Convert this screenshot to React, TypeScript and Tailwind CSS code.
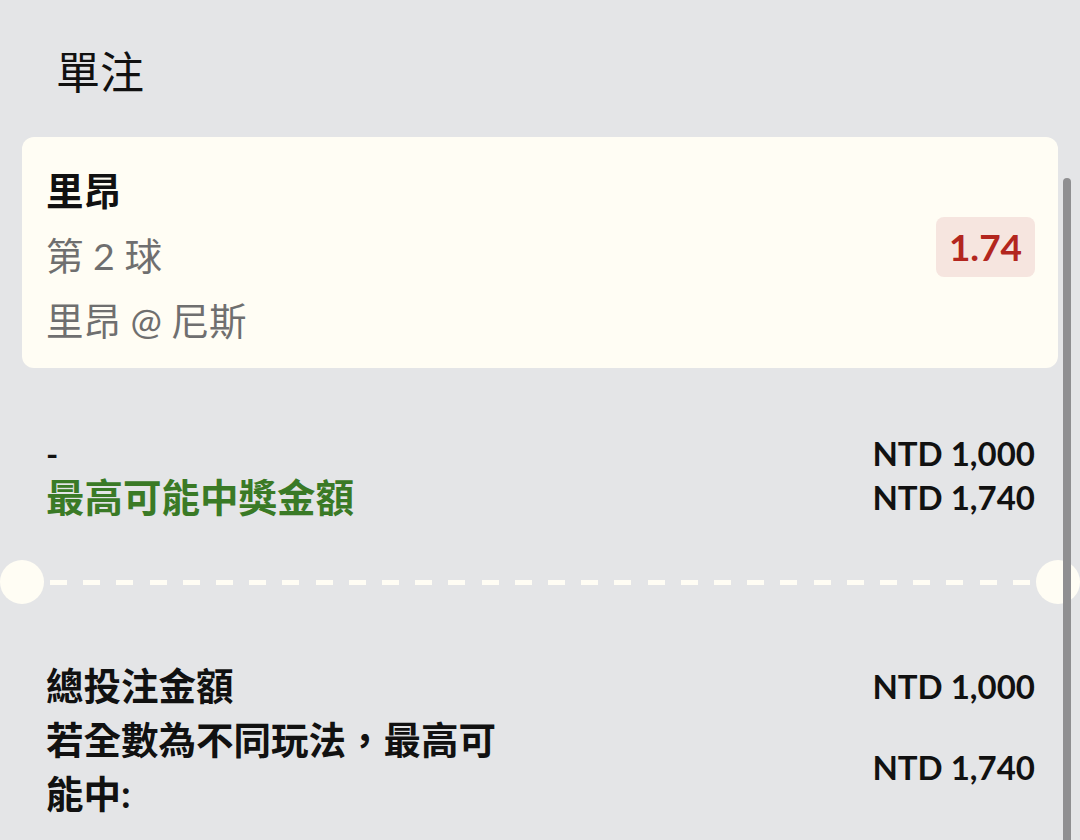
const dashes = Array.from({ length: 30 }, (_, i) => i);

function Hole() {
  return <div className="w-[44px] h-[44px] rounded-full bg-[#fffdf4] shrink-0" />;
}

export default function App() {
  return (
    <main className="relative w-[1080px] min-h-[840px] overflow-hidden bg-[#e4e5e7] text-[#111] font-['Lato','Noto_Sans_CJK_TC',sans-serif]">
      {/* HEADER */}
      <h1 className="pl-[56px] pt-[44px] text-[44px] leading-[56px] font-normal">單注</h1>

      {/* SELECTION CARD */}
      <div className="mx-[22px] mt-[37px] flex justify-between rounded-[12px] bg-[#fffdf4] pl-[24px] pr-[23px]">
        <div className="pt-[21px] pb-[15px] text-[37.5px] leading-[65px]">
          <div className="font-bold">里昂</div>
          <div className="text-[#6f6f6f]">第 2 球</div>
          <div className="text-[#6f6f6f]">里昂 @ 尼斯</div>
        </div>
        <div className="mt-[80px] flex h-[60px] w-[99px] items-center justify-center rounded-[8px] bg-[#f6e5df] text-[37px] font-bold text-[#b3261e]">
          1.74
        </div>
      </div>

      {/* STAKE SUMMARY */}
      <div className="mt-[63px] flex justify-between pl-[46px] pr-[45px] text-[33px] leading-[44px] font-bold">
        <div>
          <div>-</div>
          <div className="text-[38.5px] text-[#3a7a26]">最高可能中獎金額</div>
        </div>
        <div className="text-right">
          <div>NTD 1,000</div>
          <div>NTD 1,740</div>
        </div>
      </div>

      {/* TICKET CUT */}
      <div className="mt-[41px] flex items-center">
        <Hole />
        <div className="mx-[6px] flex flex-1 justify-between">
          {dashes.map((d) => (
            <div key={d} className="h-[5px] w-[17px] bg-[#fffdf4]" />
          ))}
        </div>
        <Hole />
      </div>

      {/* TOTALS */}
      <div className="mt-[55px] pl-[46px] pr-[45px] font-bold">
        <div className="flex items-center justify-between">
          <div className="text-[37.5px] leading-[54px]">總投注金額</div>
          <div className="text-[33px] leading-[44px]">NTD 1,000</div>
        </div>
        <div className="flex items-center justify-between">
          <div className="w-[475px] text-[37.5px] leading-[54px]">若全數為不同玩法，最高可能中:</div>
          <div className="text-[33px] leading-[44px]">NTD 1,740</div>
        </div>
      </div>

      {/* SCROLLBAR */}
      <div className="absolute right-[9px] top-[178px] bottom-0 w-[8px] rounded-t-full bg-[#8f8f91]" />
    </main>
  );
}
